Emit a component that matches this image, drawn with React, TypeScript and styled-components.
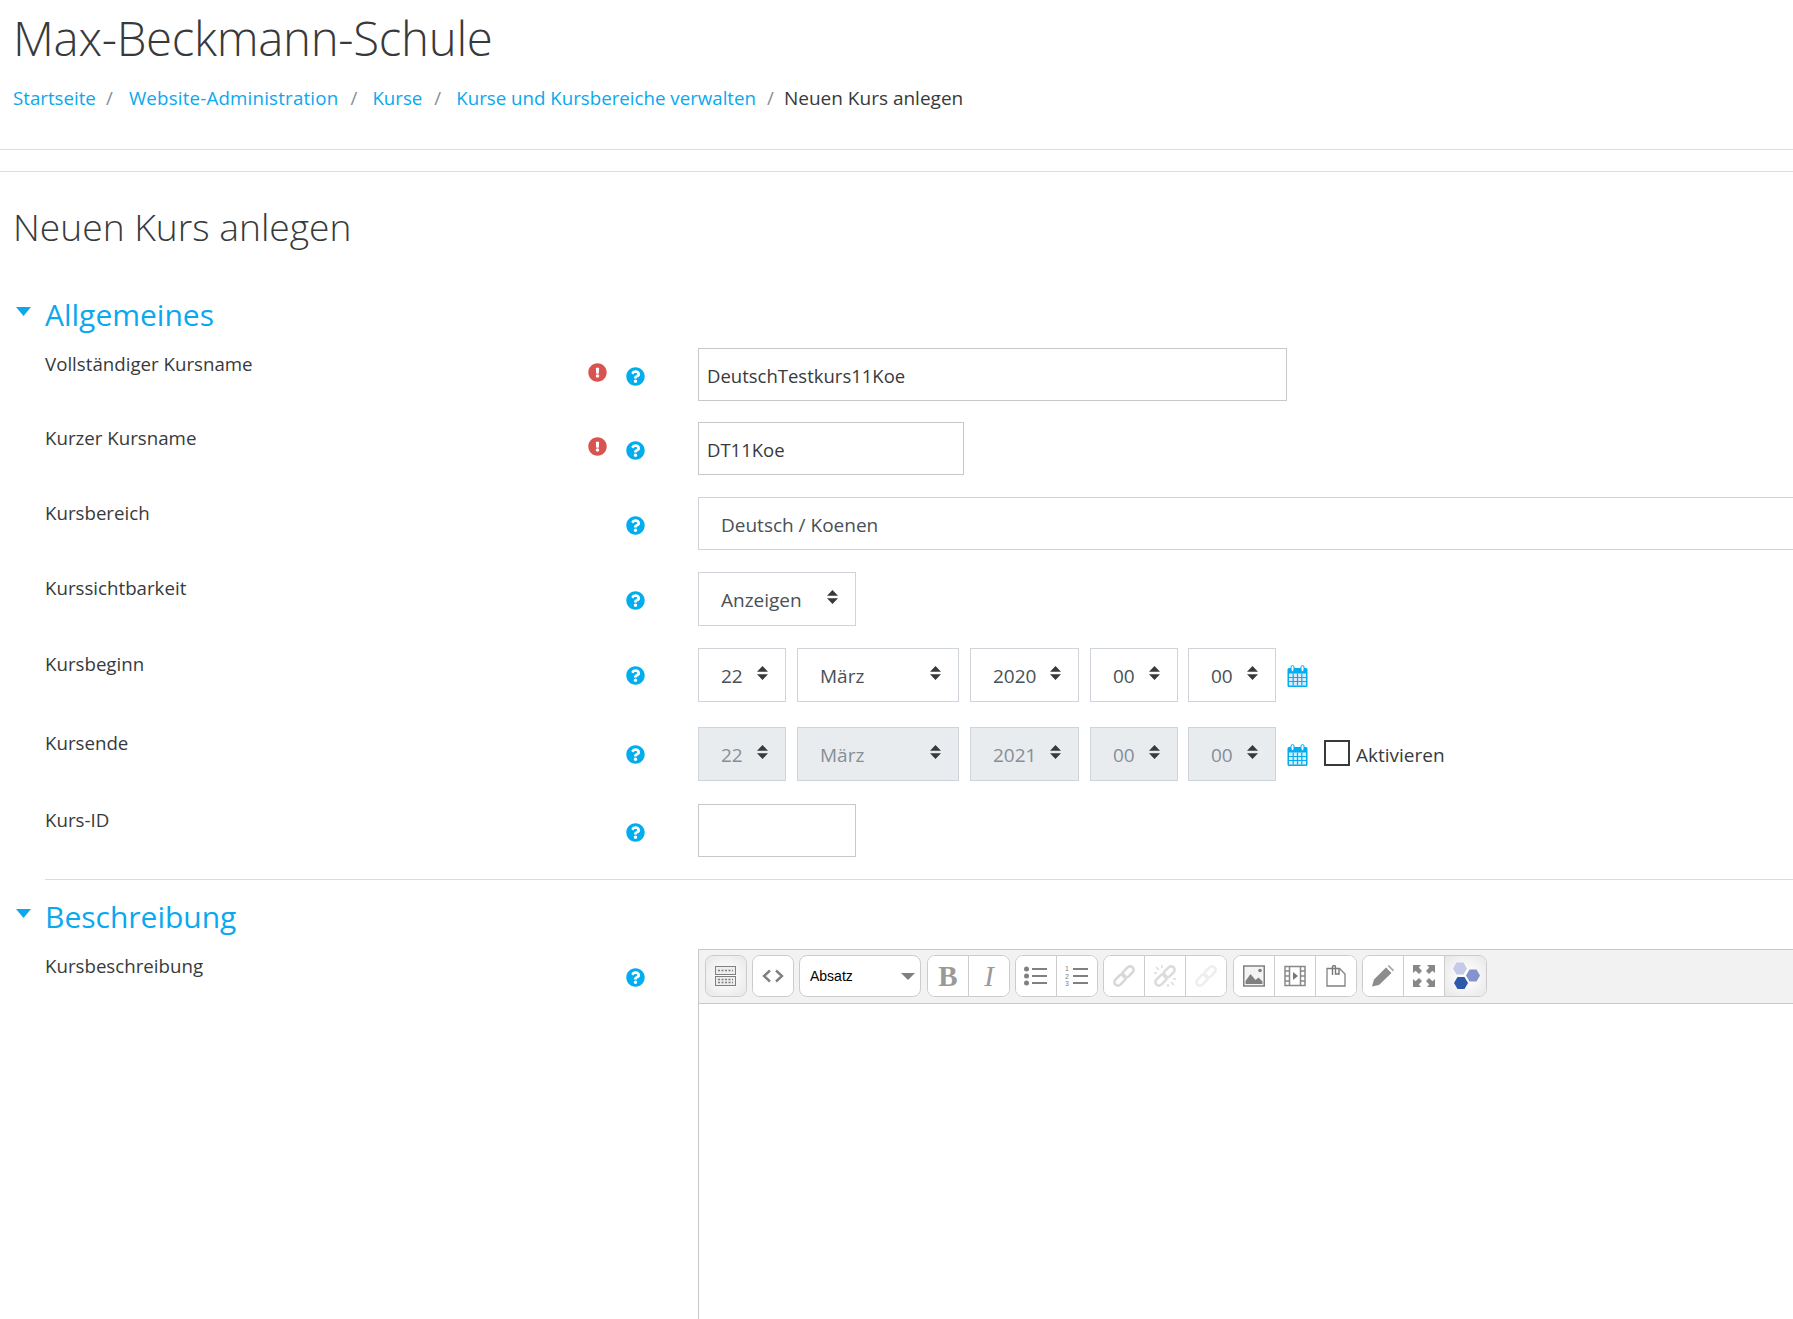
import React from "react";
import styled, { createGlobalStyle } from "styled-components";
import { FaQuestionCircle, FaExclamationCircle } from "react-icons/fa";

const Global = createGlobalStyle`
  html, body { margin: 0; padding: 0; height: 1319px; overflow: hidden; background: #fff; }
  #root { height: 1319px; overflow: hidden; }
  * { box-sizing: border-box; }
`;

const BLUE = "#0aa8ee";
const arrows = (c: string) =>
  `url("data:image/svg+xml,%3Csvg xmlns='http://www.w3.org/2000/svg' width='11' height='14'%3E%3Cpath d='M5.5 0L11 5.8H0z M5.5 14L0 8.2h11z' fill='${c}'/%3E%3C/svg%3E")`;

const Page = styled.div`
  font-family: "Open Sans", "Noto Sans", sans-serif;
  font-size: 18.7px;
  color: #373a3c;
  width: 1793px;
  height: 1319px;
  overflow: hidden;
`;
const Header = styled.header`
  height: 150px;
  padding: 8px 13px 0;
  border-bottom: 1px solid #dedede;
`;
const Title = styled.h1`
  margin: 0;
  font-weight: 300;
  font-size: 47.4px;
  line-height: 60px;
  letter-spacing: -0.3px;
`;
const Crumbs = styled.nav`
  display: flex;
  align-items: center;
  margin-top: 17px;
  line-height: 26px;
`;
const Crumb = styled.a<{ $track?: number }>`
  color: ${BLUE};
  text-decoration: none;
  letter-spacing: ${(p) => p.$track ?? 0}px;
`;
const Current = styled.span`
  color: #373a3c;
  font-size: 19px;
`;
const Sep = styled.span<{ $w: number; $pad: number }>`
  color: #868e96;
  width: ${(p) => p.$w}px;
  padding-left: ${(p) => p.$pad}px;
`;
const SubBar = styled.div`
  height: 22px;
  border-bottom: 1px solid #dedede;
`;
const Main = styled.main`
  padding: 0 0 0 13px;
`;
const PageTitle = styled.h2`
  margin: 0;
  padding-top: 29px;
  font-weight: 300;
  font-size: 37.2px;
  line-height: 52px;
`;
const Section = styled.section<{ $top: number }>`
  margin-top: ${(p) => p.$top}px;
`;
const Legend = styled.h3`
  margin: 0 0 6px;
  display: flex;
  align-items: center;
  height: 56px;
  font-weight: 400;
  font-size: 30px;
  color: ${BLUE};
`;
const Caret = styled.svg`
  width: 15px;
  height: 9px;
  margin: -6px 14px 0 3px;
  flex: none;
`;
const Row = styled.div<{ $h: number }>`
  display: grid;
  grid-template-columns: 542px 38.5px 72.5px 1fr;
  height: ${(p) => p.$h}px;
  padding-left: 32px;
`;
const Label = styled.label`
  line-height: 26px;
  margin-top: 3px;
`;
const IconCell = styled.div<{ $y: number; $c: string }>`
  display: flex;
  justify-content: center;
  width: 20px;
  padding-top: ${(p) => p.$y}px;
  color: ${(p) => p.$c};
  font-size: 19px;
`;
const Controls = styled.div`
  display: flex;
  align-items: flex-start;
  min-width: 0;
`;
const TextInput = styled.input<{ $w: number }>`
  width: ${(p) => p.$w}px;
  height: 53px;
  border: 1px solid #c8c8c8;
  padding: 1px 8px 0;
  font: inherit;
  font-size: 18.5px;
  color: #373a3c;
  background: #fff;
  outline: none;
`;
const Select = styled.select<{ $w: number; $h?: number; $gap?: number }>`
  appearance: none;
  flex: none;
  width: ${(p) => p.$w}px;
  height: ${(p) => p.$h ?? 54}px;
  margin-right: ${(p) => p.$gap ?? 10}px;
  border: 1px solid #ced4da;
  border-radius: 0;
  padding: 2px 0 0 22px;
  font: inherit;
  font-size: 19px;
  color: #495057;
  background: #fff ${arrows("%23373a3c")} no-repeat right 17px top 45%;
  outline: none;
  opacity: 1;
  &:disabled {
    background-color: #e9ecef;
    color: #868e96;
  }
`;
const Cal = styled.svg`
  width: 21px;
  height: 22px;
  margin: 17px 0 0 1px;
  flex: none;
`;
const CheckLabel = styled.label`
  display: flex;
  align-items: center;
  height: 54px;
  margin-left: 16px;
  padding-top: 1px;
  gap: 6px;
  font-size: 19px;
`;
const Check = styled.span`
  width: 26px;
  height: 26px;
  border: 2px solid #373a3c;
  margin-top: -4px;
  flex: none;
`;
const Divider = styled.div`
  height: 1px;
  margin-left: 32px;
  background: #dcdcdc;
`;
const Editor = styled.div`
  border-left: 1px solid #c8c8c8;
  border-top: 1px solid #c8c8c8;
  width: 100%;
  height: 500px;
  margin-top: -1px;
`;
const Toolbar = styled.div`
  display: flex;
  align-items: center;
  gap: 5px;
  height: 54px;
  padding: 0 6px 1px;
  background: #f2f2f2;
  border-bottom: 1px solid #c8c8c8;
`;
const Group = styled.div<{ $after?: number }>`
  display: flex;
  height: 42px;
  margin-right: ${(p) => p.$after ?? 0}px;
  background: #fff;
  border: 1px solid #ccc;
  border-radius: 8px;
  overflow: hidden;
`;
const Tool = styled.button<{ $active?: boolean }>`
  display: flex;
  align-items: center;
  justify-content: center;
  width: 41px;
  padding: 0;
  border: 0;
  border-right: 1px solid #ccc;
  background: ${(p) =>
    p.$active ? "radial-gradient(circle, #fdfdfd 20%, #e6e6e6 100%)" : "#fff"};
  &:last-child {
    width: 40px;
    border-right: 0;
  }
`;
const WideTool = styled(Tool)`
  &&:last-child {
    width: 41px;
  }
`;
const Letter = styled.span<{ $italic?: boolean }>`
  font-family: "Liberation Serif", serif;
  font-size: 29px;
  font-weight: ${(p) => (p.$italic ? 400 : 700)};
  font-style: ${(p) => (p.$italic ? "italic" : "normal")};
  color: #999;
`;
const FormatSelect = styled.div`
  position: relative;
  display: flex;
  align-items: center;
  width: 122px;
  height: 42px;
  margin-right: 1px;
  padding-left: 10px;
  background: #fff;
  border: 1px solid #ccc;
  border-radius: 8px;
  font-family: "Liberation Sans", sans-serif;
  font-size: 14px;
  color: #000;
`;
const FormatCaret = styled.i`
  position: absolute;
  right: 5px;
  top: 17px;
  border-left: 7px solid transparent;
  border-right: 7px solid transparent;
  border-top: 7px solid #808080;
`;

const CaretIcon = () => (
  <Caret viewBox="0 0 15 9">
    <path d="M0 0h15L7.500 9z" fill={BLUE} />
  </Caret>
);

const Help = ({ y }: { y: number }) => (
  <IconCell $y={y} $c="#00aeef">
    <FaQuestionCircle />
  </IconCell>
);
const Req = ({ y }: { y: number }) => (
  <IconCell $y={y} $c="#d9534f">
    <FaExclamationCircle />
  </IconCell>
);

const Calendar = () => (
  <Cal viewBox="0 0 21 22">
    <rect x="0.5" y="3" width="20" height="19" rx="1.5" fill="#00aeef" />
    <rect x="2" y="8.5" width="17" height="12" fill="#dbeafc" />
    <path d="M6.2 8.5v12M10.5 8.5v12M14.8 8.5v12M2 12.5h17M2 16.5h17" stroke="#00aeef" strokeWidth="1.2" />
    <rect x="4" y="0.5" width="3" height="6" rx="1.5" fill="#fff" stroke="#00aeef" />
    <rect x="14" y="0.5" width="3" height="6" rx="1.5" fill="#fff" stroke="#00aeef" />
  </Cal>
);

const G = "#808080";
const IconKeyboard = () => (
  <svg width="22" height="20" viewBox="0 0 22 20">
    <rect x="0.5" y="0.5" width="20" height="8" fill="#eee" stroke={G} />
    <rect x="0.5" y="10.5" width="20" height="9" fill="#eee" stroke={G} />
    <path d="M3 4.5h15M3 13.5h15M3 16.5h15" stroke={G} strokeWidth="1.5" strokeDasharray="2 1.5" />
  </svg>
);
const IconCode = () => (
  <svg width="22" height="14" viewBox="0 0 22 14">
    <path d="M8 1.5L2 7l6 5.500M14 1.500L20 7l-6 5.500" fill="none" stroke={G} strokeWidth="2.4" />
  </svg>
);
const IconBullets = () => (
  <svg width="24" height="20" viewBox="0 0 24 20">
    <circle cx="2.500" cy="3" r="2.500" fill={G} />
    <circle cx="2.500" cy="10" r="2.500" fill={G} />
    <circle cx="2.500" cy="17" r="2.500" fill={G} />
    <path d="M8 3h15M8 10h15M8 17h15" stroke={G} strokeWidth="2" />
  </svg>
);
const IconNumbers = () => (
  <svg width="24" height="22" viewBox="0 0 24 22">
    <text x="0" y="6" fontSize="7" fontFamily="Liberation Sans" fill={G}>1</text>
    <text x="0" y="13.500" fontSize="7" fontFamily="Liberation Sans" fill={G}>2</text>
    <text x="0" y="21" fontSize="7" fontFamily="Liberation Sans" fill={G}>3</text>
    <path d="M8 4h15M8 11h15M8 18h15" stroke={G} strokeWidth="2" />
  </svg>
);
const Chain = ({ c }: { c: string }) => (
  <g fill="none" stroke={c} strokeWidth="2.600">
    <rect x="11.500" y="0.500" width="7" height="13" rx="3.500" transform="rotate(45 15 7)" />
    <rect x="3.500" y="8.500" width="7" height="13" rx="3.500" transform="rotate(45 7 15)" />
  </g>
);
const IconLink = () => (
  <svg width="22" height="22" viewBox="0 0 22 22">
    <Chain c="#d8d8d8" />
  </svg>
);
const IconUnlink = () => (
  <svg width="22" height="22" viewBox="0 0 22 22">
    <Chain c="#dcdcdc" />
    <path d="M2 2l3 3M8 0v3M0 8h3M20 20l-3-3M14 22v-3M22 14h-3" stroke="#dcdcdc" strokeWidth="1.500" />
  </svg>
);
const IconAnchor = () => (
  <svg width="22" height="22" viewBox="0 0 22 22">
    <Chain c="#eeeeee" />
  </svg>
);
const IconImage = () => (
  <svg width="22" height="22" viewBox="0 0 22 22">
    <rect x="0.750" y="1" width="20.500" height="20" fill="#f4f4f4" stroke={G} strokeWidth="1.500" />
    <path d="M2.500 19v-3l5-7 5 6 3-2.500 4 4v2.500z" fill={G} />
    <circle cx="17" cy="5.500" r="1.800" fill={G} />
  </svg>
);
const IconVideo = () => (
  <svg width="22" height="22" viewBox="0 0 22 22">
    <rect x="1" y="1.500" width="20" height="19" fill="#fff" stroke="#888" strokeWidth="1.500" />
    <path d="M5.500 1.500v19M16.500 1.500v19" stroke="#888" strokeWidth="1.500" />
    <path d="M1 6h4.500M1 11h4.500M1 16h4.500M16.500 6H21M16.500 11H21M16.500 16H21" stroke="#888" strokeWidth="1.500" />
    <path d="M9 7l5 4-5 4z" fill="#777" />
  </svg>
);
const IconPaste = () => (
  <svg width="20" height="22" viewBox="0 0 20 22">
    <path d="M1 3.500h12.500L19 9v12H1z" fill="#fff" stroke={G} strokeWidth="1.300" />
    <path d="M6.500 10V2a1.500 1.500 0 0 1 3 0v7h3.500V4" fill="none" stroke="#777" strokeWidth="1.400" />
  </svg>
);
const IconPencil = () => (
  <svg width="22" height="22" viewBox="0 0 22 22">
    <path d="M0 21.500l2-7L14 2.500l5.500 5.500L7 20z" fill="#8c8c8c" />
    <path d="M15.500 1L17 0l5 5-1 1.500z" fill="#a8a8a8" />
  </svg>
);
const IconFull = () => (
  <svg width="22" height="22" viewBox="0 0 22 22">
    <path d="M0 0h8L5.800 2.500 9 6 6 9 2.500 5.800 0 8zM22 0v8l-2.500-2.200L16 9l-3-3 3.200-3.500L14 0zM0 22v-8l2.500 2.200L6 13l3 3-3.200 3.500L8 22zM22 22h-8l2.200-2.500L13 16l3-3 3.500 3.200L22 14z" fill="#888" />
  </svg>
);
const Hex = ({ x, y, c }: { x: number; y: number; c: string }) => (
  <path d={`M${x - 7} ${y}l3.500-6h7l3.500 6-3.500 6h-7z`} fill={c} />
);
const IconHex = () => (
  <svg width="30" height="30" viewBox="0 0 30 30">
    <Hex x={9} y={7.500} c="#c3cbe8" />
    <Hex x={22} y={14.500} c="#8394cc" />
    <Hex x={10} y={22} c="#2c5aa8" />
  </svg>
);

const FieldRow = ({
  h,
  label,
  help,
  req,
  children,
}: {
  h: number;
  label: string;
  help: number;
  req?: number;
  children: React.ReactNode;
}) => (
  <Row $h={h}>
    <Label>{label}</Label>
    {req !== undefined ? <Req y={req} /> : <span />}
    <Help y={help} />
    <Controls>{children}</Controls>
  </Row>
);

const DateSelects = ({ year, disabled }: { year: string; disabled?: boolean }) => (
  <>
    <Select $w={88} $gap={11} disabled={disabled}><option>22</option></Select>
    <Select $w={162} $gap={11} disabled={disabled}><option>März</option></Select>
    <Select $w={109} $gap={11} disabled={disabled}><option>{year}</option></Select>
    <Select $w={88} disabled={disabled}><option>00</option></Select>
    <Select $w={88} disabled={disabled}><option>00</option></Select>
  </>
);

export default function App() {
  return (
    <Page>
      <Global />
      <Header>
        <Title>Max-Beckmann-Schule</Title>
        <Crumbs>
          <Crumb href="#">Startseite</Crumb>
          <Sep $w={33} $pad={10}>/</Sep>
          <Crumb href="#" $track={0.2}>Website-Administration</Crumb>
          <Sep $w={34} $pad={12}>/</Sep>
          <Crumb href="#">Kurse</Crumb>
          <Sep $w={34} $pad={12}>/</Sep>
          <Crumb href="#">Kurse und Kursbereiche verwalten</Crumb>
          <Sep $w={28} $pad={11}>/</Sep>
          <Current>Neuen Kurs anlegen</Current>
        </Crumbs>
      </Header>
      <SubBar />
      <Main>
        <PageTitle>Neuen Kurs anlegen</PageTitle>
        <Section $top={33}>
          <Legend>
            <CaretIcon />
            Allgemeines
          </Legend>
          <FieldRow h={74} label="Vollständiger Kursname" help={19} req={15}>
            <TextInput $w={589} defaultValue="DeutschTestkurs11Koe" />
          </FieldRow>
          <FieldRow h={75} label="Kurzer Kursname" help={19} req={15}>
            <TextInput $w={266} defaultValue="DT11Koe" />
          </FieldRow>
          <FieldRow h={75} label="Kursbereich" help={19}>
            <Select $w={1300} $h={53}><option>Deutsch / Koenen</option></Select>
          </FieldRow>
          <FieldRow h={76} label="Kurssichtbarkeit" help={19}>
            <Select $w={158}><option>Anzeigen</option></Select>
          </FieldRow>
          <FieldRow h={79} label="Kursbeginn" help={18}>
            <DateSelects year="2020" />
            <Calendar />
          </FieldRow>
          <FieldRow h={77} label="Kursende" help={18}>
            <DateSelects year="2021" disabled />
            <Calendar />
            <CheckLabel>
              <Check />
              Aktivieren
            </CheckLabel>
          </FieldRow>
          <FieldRow h={75} label="Kurs-ID" help={19}>
            <TextInput $w={158} />
          </FieldRow>
        </Section>
        <Divider />
        <Section $top={8}>
          <Legend>
            <CaretIcon />
            Beschreibung
          </Legend>
          <FieldRow h={500} label="Kursbeschreibung" help={18}>
            <Editor>
              <Toolbar>
                <Group><Tool $active><IconKeyboard /></Tool></Group>
                <Group><Tool><IconCode /></Tool></Group>
                <FormatSelect>Absatz<FormatCaret /></FormatSelect>
                <Group>
                  <Tool><Letter>B</Letter></Tool>
                  <Tool><Letter $italic>I</Letter></Tool>
                </Group>
                <Group>
                  <Tool><IconBullets /></Tool>
                  <Tool><IconNumbers /></Tool>
                </Group>
                <Group $after={1}>
                  <Tool><IconLink /></Tool>
                  <Tool><IconUnlink /></Tool>
                  <Tool><IconAnchor /></Tool>
                </Group>
                <Group>
                  <Tool><IconImage /></Tool>
                  <Tool><IconVideo /></Tool>
                  <Tool><IconPaste /></Tool>
                </Group>
                <Group>
                  <Tool><IconPencil /></Tool>
                  <Tool><IconFull /></Tool>
                  <WideTool $active><IconHex /></WideTool>
                </Group>
              </Toolbar>
            </Editor>
          </FieldRow>
        </Section>
      </Main>
    </Page>
  );
}
